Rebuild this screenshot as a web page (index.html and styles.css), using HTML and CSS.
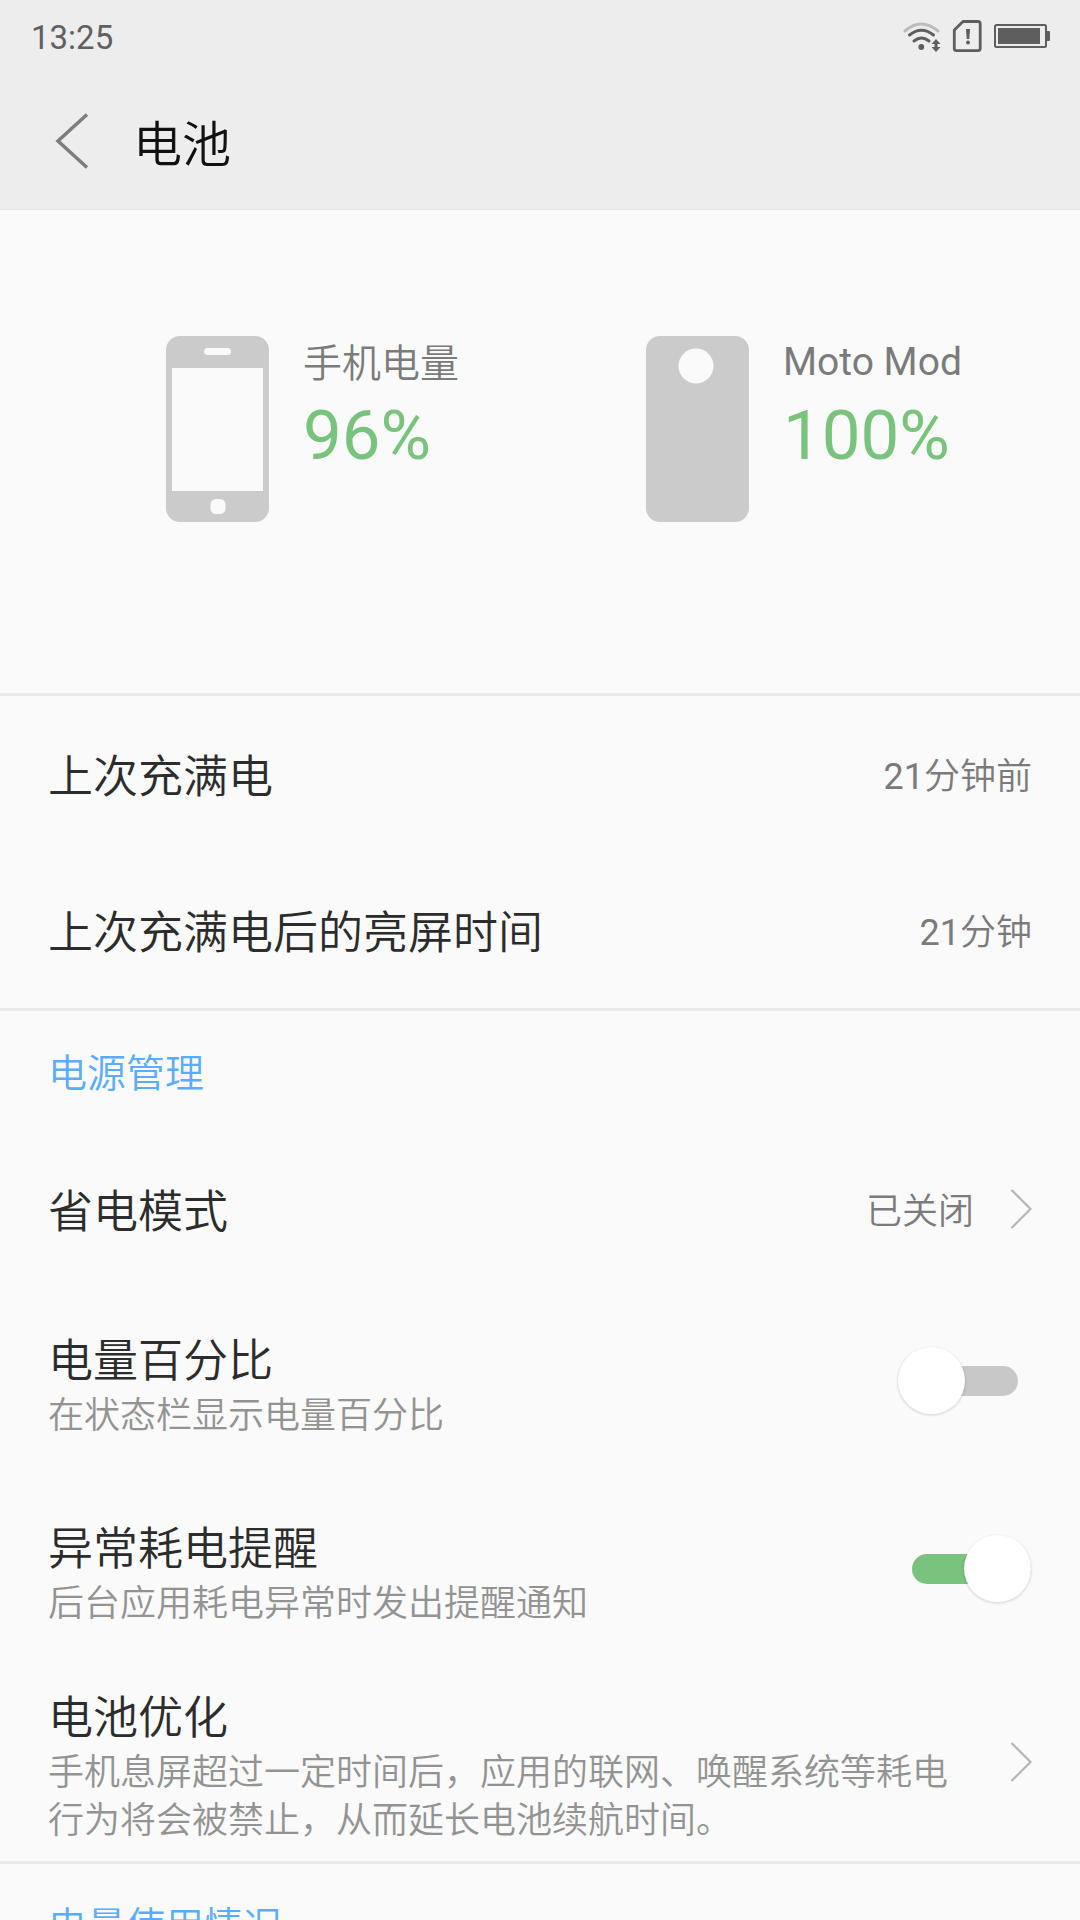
FILE: index.html
```html
<!DOCTYPE html>
<html lang="zh-CN">
<head>
<meta charset="utf-8">
<title>电池</title>
<link rel="stylesheet" href="styles.css">
</head>
<body>
<div class="screen">
  <header class="header">
    <div class="status">
      <span class="clock">13:25</span>
      <svg class="status-icons" width="150" height="40" viewBox="900 16 150 40">
        <g fill="none" stroke="#5e5e5e" stroke-width="3" stroke-linecap="round">
          <path d="M905 31Q921 17 938 31" stroke="#bcbcbc"/>
          <path d="M909.500 35Q921.500 25.500 933.500 35"/>
          <path d="M914 41Q921.500 35 929 41"/>
        </g>
        <circle cx="921.300" cy="47" r="2.900" fill="#5e5e5e"/>
        <path d="M936 39l4.500 5h-3v3h3l-4.500 5-4.500-5h3v-3h-3z" fill="#5e5e5e"/>
        <path d="M963 21.500H978a2.200 2.200 0 0 1 2.200 2.200V48.500a2.200 2.200 0 0 1-2.200 2.200H956.500a2.200 2.200 0 0 1-2.200-2.200V30z" fill="none" stroke="#5e5e5e" stroke-width="2.800" stroke-linejoin="round"/>
        <path d="M966 29h4l-.7 10h-2.600z" fill="#5e5e5e"/>
        <circle cx="968" cy="42.500" r="2" fill="#5e5e5e"/>
        <rect x="995" y="25" width="51" height="22" rx="1.500" fill="none" stroke="#5e5e5e" stroke-width="2"/>
        <path d="M998 28h42v16h-42zM1047 31h2a1 1 0 0 1 1 1v8a1 1 0 0 1-1 1h-2z" fill="#5e5e5e"/>
      </svg>
    </div>
    <div class="titlebar">
      <svg class="back" width="36" height="60" viewBox="0 0 36 60"><path d="M33 3.500L4 30L33 56.500" fill="none" stroke="#7d7d7d" stroke-width="3.500"/></svg>
      <h1 class="title">电池</h1>
    </div>
  </header>

  <section class="overview">
    <div class="device">
      <svg width="103" height="186" viewBox="0 0 103 186">
        <rect width="103" height="186" rx="14" fill="#cbcbcb"/>
        <rect x="38" y="12" width="27" height="7" rx="3.500" fill="#fafafa"/>
        <rect x="6" y="32" width="91" height="123" fill="#fafafa"/>
        <rect x="44.500" y="163" width="15" height="15" rx="5.500" fill="#fafafa"/>
      </svg>
      <div class="device-info">
        <div class="device-name device-name-cjk">手机电量</div>
        <div class="device-level">96%</div>
      </div>
    </div>
    <div class="device">
      <svg width="103" height="186" viewBox="0 0 103 186">
        <rect width="103" height="186" rx="14" fill="#cbcbcb"/>
        <circle cx="50" cy="30" r="17.500" fill="#fafafa"/>
      </svg>
      <div class="device-info">
        <div class="device-name">Moto Mod</div>
        <div class="device-level">100%</div>
      </div>
    </div>
  </section>

  <section class="group">
    <div class="row">
      <div class="label">上次充满电</div>
      <div class="value">21<span class="unit">分钟前</span></div>
    </div>
    <div class="row">
      <div class="label">上次充满电后的亮屏时间</div>
      <div class="value">21<span class="unit">分钟</span></div>
    </div>
  </section>

  <section class="group">
    <h2 class="group-title">电源管理</h2>
    <div class="row">
      <div class="label">省电模式</div>
      <div class="value"><span class="unit">已关闭</span></div>
      <svg class="chevron" width="23" height="42" viewBox="0 0 23 42"><path d="M1.500 2L20.500 21L1.500 40" fill="none" stroke="#b5b5b5" stroke-width="2.200"/></svg>
    </div>
    <div class="row row-switch">
      <div class="text">
        <div class="label">电量百分比</div>
        <div class="summary">在状态栏显示电量百分比</div>
      </div>
      <div class="switch"><span class="thumb"></span></div>
    </div>
    <div class="row row-switch">
      <div class="text">
        <div class="label">异常耗电提醒</div>
        <div class="summary">后台应用耗电异常时发出提醒通知</div>
      </div>
      <div class="switch switch-on"><span class="thumb"></span></div>
    </div>
    <div class="row row-tall">
      <div class="text">
        <div class="label">电池优化</div>
        <div class="summary">手机息屏超过一定时间后，应用的联网、唤醒系统等耗电<br>行为将会被禁止，从而延长电池续航时间。</div>
      </div>
      <svg class="chevron" width="23" height="42" viewBox="0 0 23 42"><path d="M1.500 2L20.500 21L1.500 40" fill="none" stroke="#b5b5b5" stroke-width="2.200"/></svg>
    </div>
  </section>

  <section class="group">
    <h2 class="group-title">电量使用情况</h2>
  </section>
</div>
</body>
</html>
```
FILE: styles.css
```css
* { box-sizing: border-box; }

body {
  margin: 0;
  background: #fafafa;
  font-family: Roboto, "Noto Sans CJK SC", sans-serif;
  font-weight: 400;
}

h1, h2 { margin: 0; font-weight: 400; }
svg { display: block; flex: none; }

.screen {
  width: 1080px;
  height: 1920px;
  overflow: hidden;
}

.header {
  height: 210px;
  background: #ededed;
  border-bottom: 1px solid #e6e6e6;
}

.status {
  display: flex;
  justify-content: space-between;
  align-items: center;
  height: 72px;
  padding: 0 30px 0 31px;
}

.clock {
  font-size: 33px;
  line-height: 40px;
  padding-top: 3px;
  color: #606060;
}

.titlebar {
  display: flex;
  align-items: center;
  height: 138px;
  padding-left: 54px;
  gap: 43px;
}

.title {
  font-size: 49px;
  font-weight: 350;
  line-height: 60px;
  padding-top: 10px;
  color: #111;
}

.overview {
  display: grid;
  grid-template-columns: 480px 1fr;
  height: 483px;
  padding: 126px 0 0 166px;
}

.device {
  display: flex;
  align-items: flex-start;
  gap: 34px;
}

.device-name {
  height: 51px;
  padding-top: 1px;
  font-size: 39px;
  line-height: 50px;
  color: #7b7b7b;
}

.device-name-cjk {
  padding-top: 3px;
  font-weight: 350;
}

.device-level {
  font-size: 69px;
  line-height: 80px;
  margin-top: 9px;
  color: #79c37c;
}

.group { border-top: 3px solid #eaeaea; }

.group-title {
  height: 120px;
  padding: 38px 48px 0;
  font-size: 39px;
  font-weight: 350;
  line-height: 50px;
  color: #5aadfd;
}

.row {
  display: flex;
  align-items: center;
  height: 156px;
  padding: 0 48px;
}

.row-switch { height: 188px; }
.row-tall { height: 198px; }

.text {
  flex: 1;
  padding-top: 9px;
}

.label {
  flex: 1;
  padding-top: 8px;
  font-size: 45px;
  font-weight: 350;
  line-height: 56px;
  color: #2c2c2c;
}

.text .label { padding-top: 3px; }

.summary {
  padding-top: 2px;
  font-size: 36px;
  font-weight: 350;
  line-height: 48px;
  color: #939393;
}

.value {
  padding-top: 5px;
  font-size: 36px;
  line-height: 48px;
  color: #7b7b7b;
}

.unit { font-weight: 350; }

.chevron { margin: 0 -1px 0 36px; }

.switch {
  display: flex;
  align-items: center;
  width: 106px;
  height: 30px;
  margin-right: 14px;
  border-radius: 15px;
  background: #c8c8c8;
}

.thumb {
  flex: none;
  width: 67px;
  height: 67px;
  margin: -2px 0 0 -14px;
  border-radius: 50%;
  background: #fff;
  box-shadow: 0 1px 2px 1px rgba(0, 0, 0, .1);
}

.switch-on {
  justify-content: flex-end;
  margin-right: 1px;
  width: 119px;
  background: #79c37c;
}
```
